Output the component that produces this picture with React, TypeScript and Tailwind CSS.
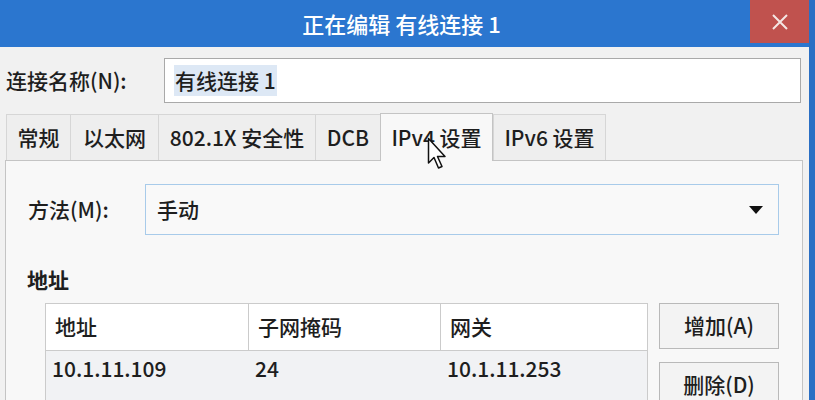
import React from "react";

const font = { fontFamily: '"Noto Sans CJK SC", "Noto Sans", sans-serif' };

const tabs = [
  { label: "常规", w: "w-[64px]" },
  { label: "以太网", w: "w-[88px]" },
  { label: "802.1X 安全性", w: "w-[157px]" },
  { label: "DCB", w: "w-[65px]" },
  { label: "IPv4 设置", w: "w-[113px]", active: true },
  { label: "IPv6 设置", w: "w-[113px]" },
];

function Cursor() {
  return (
    <svg className="absolute left-[427px] top-[137px] z-20" width="20" height="34" viewBox="0 0 20 34">
      <path d="M1.5 1.5 L1.5 26 L7 20.5 L11.5 31 L15 29.5 L10.5 19.5 L18 19.5 Z" fill="#ffffff" stroke="#111" strokeWidth="1.5" strokeLinejoin="round" />
    </svg>
  );
}

export default function App() {
  return (
    <div className="relative h-[400px] w-[815px] overflow-hidden bg-[#f1f1f1] font-medium text-[#1e1e1e]" style={font}>
      <div className="flex h-full">
        <div className="flex w-[809px] flex-col">
          {/* title bar */}
          <div className="relative flex h-[47px] shrink-0 items-center justify-center bg-[#2b76cf]">
            <span className="ml-[-6px] text-[22px] font-medium text-white">正在编辑 有线连接 1</span>
            <div className="absolute right-0 top-0 flex h-[43px] w-[59px] items-center justify-center bg-[#c0524e]">
              <svg width="18" height="18" viewBox="0 0 18 18">
                <path d="M2 2 L16 16 M16 2 L2 16" stroke="#f4e6e4" strokeWidth="2" />
              </svg>
            </div>
          </div>

          {/* name */}
          <div className="flex items-center pt-[11px]">
            <span className="w-[164px] pl-[6px] text-[21px]">连接名称(N):</span>
            <div className="flex h-[45px] w-[637px] items-center border border-[#a9a9a9] bg-white pl-[9px]">
              <span className="bg-[#dde8f5] px-[1px] text-[21px]">有线连接 1</span>
            </div>
          </div>

          {/* tabs */}
          <div className="mt-[10px] flex h-[47px] items-end pl-[6px]">
            {tabs.map((t) =>
              t.active ? (
                <div
                  key={t.label}
                  className={`${t.w} z-10 -mb-[1px] flex h-[48px] items-center justify-center border border-b-0 border-[#c4c4c4] bg-[#f8f8f8] text-[21px]`}
                >
                  {t.label}
                </div>
              ) : (
                <div
                  key={t.label}
                  className={`${t.w} flex h-[46px] items-center justify-center border-l border-t border-[#d6d6d6] bg-[#eeeeee] text-[21px] last:border-r`}
                >
                  {t.label}
                </div>
              )
            )}
          </div>

          {/* panel */}
          <div className="ml-[5px] mr-[6px] flex-1 border border-[#c4c4c4] bg-[#f8f8f8]">
            <div className="flex items-center pt-[23px]">
              <span className="w-[139px] pl-[22px] text-[21px]">方法(M):</span>
              <div className="flex h-[51px] w-[634px] items-center justify-between border border-[#a8cbea] bg-[#f9f9f9] pl-[11px] pr-[15px]">
                <span className="text-[21px]">手动</span>
                <svg width="14" height="8" viewBox="0 0 14 8">
                  <path d="M0 0 L14 0 L7 8 Z" fill="#111" />
                </svg>
              </div>
            </div>

            <div className="pl-[21px] pt-[29px] text-[21px] font-bold leading-[30px]">地址</div>

            <div className="mt-[9px] flex gap-[11px] pl-[39px]">
              <div className="w-[603px] border border-[#cbcbcb] bg-[#f1f2f4]">
                <div className="flex h-[47px] items-center border-b border-[#cbcbcb] bg-white text-[21px]">
                  <div className="flex h-full w-[203px] items-center border-r border-[#cbcbcb] pl-[9px]">地址</div>
                  <div className="flex h-full w-[192px] items-center border-r border-[#cbcbcb] pl-[9px]">子网掩码</div>
                  <div className="flex h-full flex-1 items-center pl-[9px]">网关</div>
                </div>
                <div className="flex h-[40px] items-start pt-[2px] text-[21px]">
                  <div className="w-[203px] pl-[6px]">10.1.11.109</div>
                  <div className="w-[192px] pl-[6px]">24</div>
                  <div className="flex-1 pl-[6px]">10.1.11.253</div>
                </div>
              </div>
              <div className="flex flex-col gap-[13px]">
                <div className="flex h-[46px] w-[120px] items-center justify-center border border-[#b9b9b9] bg-[#f3f3f3] text-[21px]">增加(A)</div>
                <div className="flex h-[46px] w-[120px] items-center justify-center border border-[#b9b9b9] bg-[#f3f3f3] text-[21px]">删除(D)</div>
              </div>
            </div>
          </div>
        </div>
        <div className="w-[6px] bg-[#2a6fc4]" />
      </div>
      <Cursor />
    </div>
  );
}
